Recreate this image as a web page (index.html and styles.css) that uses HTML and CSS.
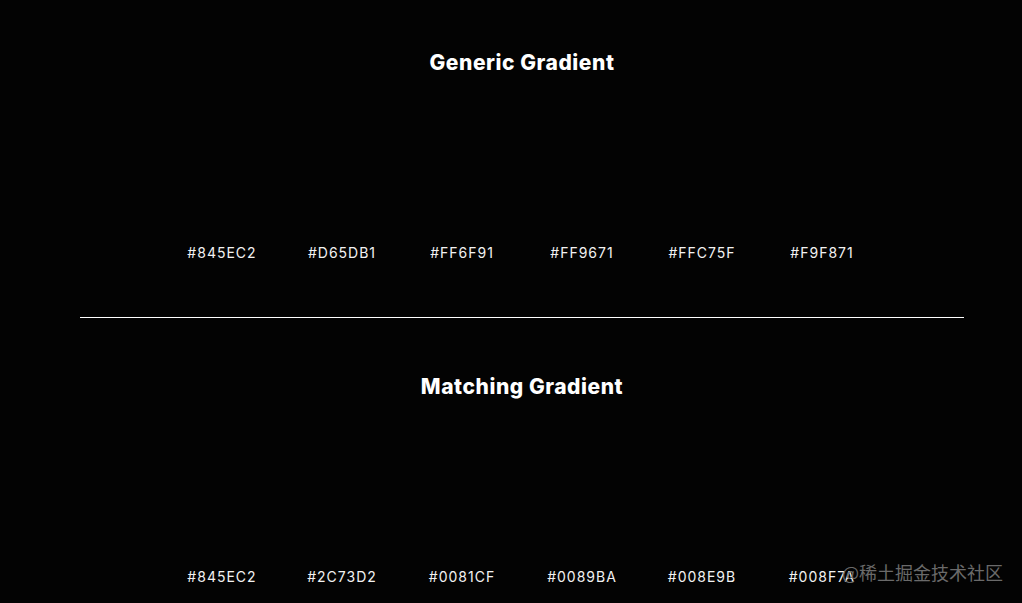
FILE: index.html
```html
<!DOCTYPE html>
<html lang="en">
<head>
<meta charset="utf-8">
<title>Gradients</title>
<link rel="stylesheet" href="styles.css">
</head>
<body>
<main class="page">
  <section class="section">
    <h2 class="title">Generic Gradient</h2>
    <div class="palette">
      <div class="swatch"><div class="chip"></div><span class="hex">#845EC2</span></div>
      <div class="swatch"><div class="chip"></div><span class="hex">#D65DB1</span></div>
      <div class="swatch"><div class="chip"></div><span class="hex">#FF6F91</span></div>
      <div class="swatch"><div class="chip"></div><span class="hex">#FF9671</span></div>
      <div class="swatch"><div class="chip"></div><span class="hex">#FFC75F</span></div>
      <div class="swatch"><div class="chip"></div><span class="hex">#F9F871</span></div>
    </div>
  </section>
  <hr class="divider">
  <section class="section second">
    <h2 class="title">Matching Gradient</h2>
    <div class="palette">
      <div class="swatch"><div class="chip"></div><span class="hex">#845EC2</span></div>
      <div class="swatch"><div class="chip"></div><span class="hex">#2C73D2</span></div>
      <div class="swatch"><div class="chip"></div><span class="hex">#0081CF</span></div>
      <div class="swatch"><div class="chip"></div><span class="hex">#0089BA</span></div>
      <div class="swatch"><div class="chip"></div><span class="hex">#008E9B</span></div>
      <div class="swatch"><div class="chip"></div><span class="hex">#008F7A</span></div>
    </div>
  </section>
</main>
<div class="watermark">@稀土掘金技术社区</div>
</body>
</html>
```
FILE: styles.css
```css
html, body {
  margin: 0;
  padding: 0;
  background: #030303;
  height: 100%;
  overflow: hidden;
}
body {
  font-family: Inter, "Open Sans", "Liberation Sans", sans-serif;
  color: #ffffff;
}
.page {
  margin-left: 80px;
  width: 884px;
  display: flex;
  flex-direction: column;
}
.section {
  display: flex;
  flex-direction: column;
  align-items: center;
  padding-top: 51px;
}
.section.second {
  padding-top: 57px;
}
.title {
  margin: 0;
  font-size: 21px;
  line-height: 24px;
  font-weight: 800;
  letter-spacing: 0.55px;
}
.palette {
  display: flex;
  margin-top: 20px;
}
.swatch {
  width: 120px;
  display: flex;
  flex-direction: column;
  align-items: center;
  gap: 9px;
}
.chip {
  width: 100%;
  height: 140px;
}
.hex {
  font-size: 14px;
  line-height: 18px;
  letter-spacing: 1px;
  color: #f2f2f2;
}
.divider {
  margin: 55px 0 0 0;
  border: 0;
  height: 1px;
  background: #ffffff;
}
.watermark {
  position: absolute;
  left: 842px;
  top: 561px;
  font-family: "Noto Sans CJK SC", sans-serif;
  font-size: 18px;
  line-height: 22px;
  color: #6a6a6a;
  white-space: nowrap;
}
```
